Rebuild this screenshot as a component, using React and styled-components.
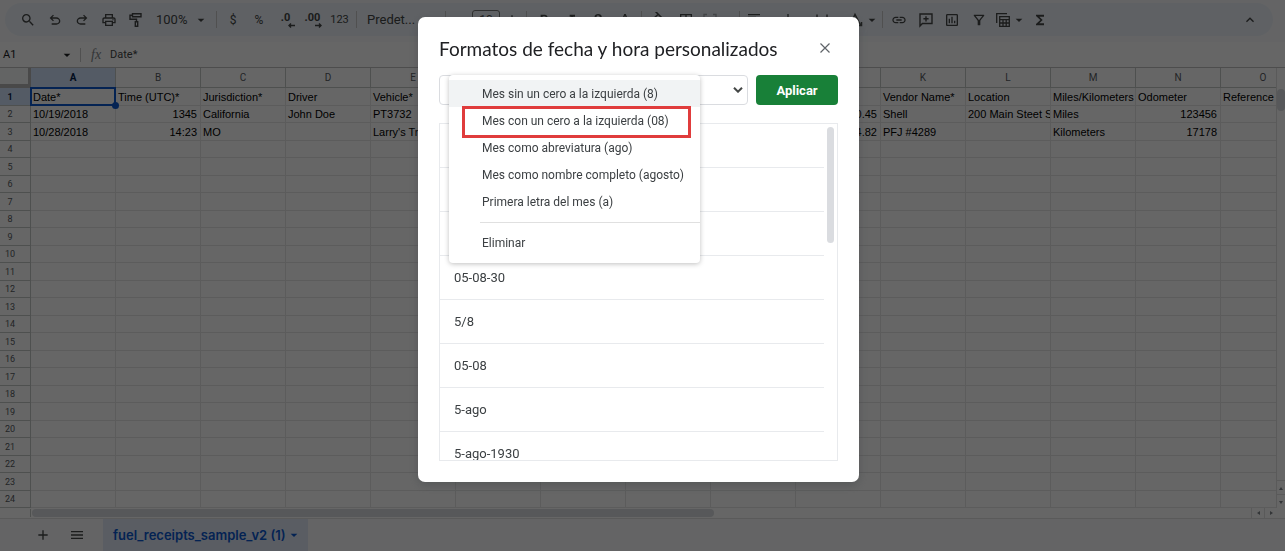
import React from "react";
import styled, { createGlobalStyle, css } from "styled-components";
import {
  MdSearch,
  MdOutlinePrint,
  MdOutlineInsertChart,
  MdOutlineFilterAlt,
  MdFunctions,
  MdArrowDropDown,
  MdKeyboardArrowUp,
  MdAdd,
  MdRemove,
  MdMenu,
  MdFormatBold,
  MdFormatItalic,
  MdStrikethroughS,
  MdFormatColorText,
  MdBorderAll,
  MdFormatAlignLeft,
  MdVerticalAlignBottom,
  MdLink,
} from "react-icons/md";

const columns = ["A", "B", "C", "D", "E", "F", "G", "H", "I", "J", "K", "L", "M", "N", "O"];

const cells = {
  A: ["Date*", "10/19/2018", "10/28/2018"],
  B: ["Time (UTC)*", "1345", "14:23"],
  C: ["Jurisdiction*", "California", "MO"],
  D: ["Driver", "John Doe"],
  E: ["Vehicle*", "PT3732", "Larry's Tr"],
  J: ["", "0.45", "4.82"],
  K: ["Vendor Name*", "Shell", "PFJ #4289"],
  L: ["Location", "200 Main Steet S"],
  M: ["Miles/Kilometers", "Miles", "Kilometers"],
  N: ["Odometer", "123456", "17178"],
  O: ["Reference"],
};

const numeric = ["B", "J", "N"];
const rows = Array.from({ length: 24 }, (_, i) => i);

const monthOptions = [
  "Mes sin un cero a la izquierda (8)",
  "Mes con un cero a la izquierda (08)",
  "Mes como abreviatura (ago)",
  "Mes como nombre completo (agosto)",
  "Primera letra del mes (a)",
];

const formats = ["", "", "", "05-08-30", "5/8", "05-08", "5-ago", "5-ago-1930"];

const UndoIcon = () => (
  <svg viewBox="0 -960 960 960" width="16" height="16" fill="currentColor">
    <path d="M280-200v-80h284q63 0 109.500-40T720-420q0-60-46.500-100T564-560H312l104 104-56 56-200-200 200-200 56 56-104 104h252q97 0 166.500 63T800-420q0 94-69.500 157T564-200H280Z" />
  </svg>
);

const RedoIcon = () => (
  <svg viewBox="0 -960 960 960" width="16" height="16" fill="currentColor">
    <path d="M396-200q-97 0-166.500-63T160-420q0-94 69.500-157T396-640h252L544-744l56-56 200 200-200 200-56-56 104-104H396q-63 0-109.500 40T240-420q0 60 46.500 100T396-280h284v80H396Z" />
  </svg>
);

const RollerIcon = () => (
  <svg viewBox="0 0 16 16" width="16" height="16" fill="none" stroke="currentColor" strokeWidth="1.4">
    <path d="M4.500 1.700h8.500v3H4.500zM4.500 3.200H2v4h6.500v2.500M7.300 9.700h2.400v4.600H7.300z" />
  </svg>
);

const CommentIcon = () => (
  <svg viewBox="0 0 16 16" width="16" height="16" fill="none" stroke="currentColor" strokeWidth="1.4">
    <path d="M2 14V2h12v9.500H4.400zM8 4.200v5.200M5.400 6.800h5.200" />
  </svg>
);

const FillIcon = () => (
  <svg viewBox="0 0 16 16" width="16" height="16" fill="none" stroke="currentColor" strokeWidth="1.5">
    <path d="M4 -1L12 7L6.500 12L1.500 7.500L7 2.500" />
  </svg>
);

const MergeIcon = () => (
  <svg viewBox="0 0 16 16" width="16" height="16" fill="none" stroke="currentColor" strokeWidth="1.4">
    <path d="M5 2.500H2v3M11 2.500h3v3M5 13.500H2v-3M11 13.500h3v-3M1.500 8h4M14.500 8h-4" />
  </svg>
);

const WrapIcon = () => (
  <svg viewBox="0 0 16 16" width="16" height="16" fill="none" stroke="currentColor" strokeWidth="1.4">
    <path d="M3 2.500v11M13 2.500v11M5 8h5M8 6l2 2l-2 2" />
  </svg>
);

const RotateIcon = () => (
  <svg viewBox="0 0 16 16" width="16" height="16" fill="none" stroke="currentColor" strokeWidth="1.5">
    <path d="M3 11L7 2.500L12.500 13M4.500 8h5M13.500 10v3.500H10" />
  </svg>
);

const TablesIcon = () => (
  <svg viewBox="0 0 16 16" width="16" height="16" fill="none" stroke="currentColor" strokeWidth="1.3">
    <path d="M1.700 11V1.700H12M4.700 4.700h9.600v9.600H4.700zM4.700 7.700h9.600M4.700 11h9.600M8 7.700v6.600M11.200 7.700v6.600" />
  </svg>
);

const ArrowLeft = () => (
  <svg viewBox="0 0 7 5" fill="none" stroke="currentColor" strokeWidth="1.4">
    <path d="M7 2.500H1M3 .500L1 2.500L3 4.500" />
  </svg>
);

const ArrowRight = () => (
  <svg viewBox="0 0 7 5" fill="none" stroke="currentColor" strokeWidth="1.4">
    <path d="M0 2.500H6M4 .500L6 2.500L4 4.500" />
  </svg>
);

const CloseIcon = () => (
  <svg viewBox="0 0 16 16" width="16" height="16" fill="none" stroke="currentColor" strokeWidth="1.2">
    <path d="M3.500 3.500L12.500 12.500M12.500 3.500L3.500 12.500" />
  </svg>
);

export default function App() {
  return (
    <>
      <GlobalStyle />
      <Sheet>
        <Toolbar>
          <ToolButton aria-label="Buscar"><MdSearch /></ToolButton>
          <ToolButton aria-label="Deshacer"><UndoIcon /></ToolButton>
          <ToolButton aria-label="Rehacer"><RedoIcon /></ToolButton>
          <ToolButton aria-label="Imprimir"><MdOutlinePrint /></ToolButton>
          <ToolButton aria-label="Copiar formato"><RollerIcon /></ToolButton>
          <TextDropdown $width="64px">
            100%
            <MdArrowDropDown />
          </TextDropdown>
          <Separator />
          <ToolButton $width="26px">$</ToolButton>
          <ToolButton $width="26px">%</ToolButton>
          <Decimal>.0<ArrowLeft /></Decimal>
          <Decimal>.00<ArrowRight /></Decimal>
          <ToolButton $small>123</ToolButton>
          <Separator />
          <TextDropdown $width="82px">Predet...</TextDropdown>
          <Separator />
          <ToolButton $width="23px" aria-label="Reducir"><MdRemove /></ToolButton>
          <SizeInput aria-label="Tamaño de fuente" defaultValue="10" />
          <ToolButton $width="23px" aria-label="Aumentar"><MdAdd /></ToolButton>
          <Separator />
          <ToolButton aria-label="Negrita"><MdFormatBold /></ToolButton>
          <ToolButton aria-label="Cursiva"><MdFormatItalic /></ToolButton>
          <ToolButton aria-label="Tachado"><MdStrikethroughS /></ToolButton>
          <ToolButton aria-label="Color del texto"><MdFormatColorText /></ToolButton>
          <Separator />
          <ToolButton aria-label="Color de relleno"><FillIcon /></ToolButton>
          <ToolButton aria-label="Bordes"><MdBorderAll /></ToolButton>
          <IconDropdown $width="37px" $faded aria-label="Combinar"><MergeIcon /><MdArrowDropDown /></IconDropdown>
          <Separator />
          <IconDropdown $width="34px" aria-label="Alinear"><MdFormatAlignLeft /><MdArrowDropDown /></IconDropdown>
          <IconDropdown $width="34px" aria-label="Alinear en vertical"><MdVerticalAlignBottom /><MdArrowDropDown /></IconDropdown>
          <IconDropdown $width="34px" aria-label="Ajuste"><WrapIcon /><MdArrowDropDown /></IconDropdown>
          <IconDropdown $width="34px" aria-label="Rotar"><RotateIcon /><MdArrowDropDown /></IconDropdown>
          <Separator />
          <ToolButton $width="26px" aria-label="Enlace"><MdLink /></ToolButton>
          <ToolButton aria-label="Comentario"><CommentIcon /></ToolButton>
          <ToolButton $width="26px" aria-label="Gráfico"><MdOutlineInsertChart /></ToolButton>
          <ToolButton aria-label="Filtro"><MdOutlineFilterAlt /></ToolButton>
          <IconDropdown $width="35px" aria-label="Tablas"><TablesIcon /><MdArrowDropDown /></IconDropdown>
          <ToolButton $width="26px" aria-label="Funciones"><MdFunctions /></ToolButton>
          <Spacer />
          <ToolButton aria-label="Ocultar menús"><MdKeyboardArrowUp /></ToolButton>
        </Toolbar>

        <FormulaBar>
          <NameBox>
            A1
            <MdArrowDropDown />
          </NameBox>
          <Separator $short />
          <Fx>fx</Fx>
          <FormulaInput aria-label="Fórmula" defaultValue="Date*" />
        </FormulaBar>

        <GridArea>
          <GridScroll>
            <Grid>
              <thead>
                <tr>
                  <Corner />
                  {columns.map((c) => (
                    <ColHead key={c} $active={c === "A"}>{c}</ColHead>
                  ))}
                </tr>
              </thead>
              <tbody>
                {rows.map((r) => (
                  <Row key={r}>
                    <RowHead $active={r === 0}>{r + 1}</RowHead>
                    {columns.map((c) => (
                      <Cell key={c} $right={r > 0 && numeric.includes(c)} $selected={r === 0 && c === "A"}>
                        <span>{cells[c]?.[r]}</span>
                      </Cell>
                    ))}
                  </Row>
                ))}
              </tbody>
            </Grid>
          </GridScroll>
          <VerticalBar>
            <VerticalThumb />
            <Spacer />
            <Arrow $dir="up" />
            <Arrow $dir="down" />
          </VerticalBar>
        </GridArea>

        <HorizontalBar>
          <HorizontalTrack><HorizontalThumb /></HorizontalTrack>
          <Arrow $dir="left" />
          <Arrow $dir="right" />
        </HorizontalBar>

        <Tabs>
          <TabTool aria-label="Añadir hoja"><MdAdd /></TabTool>
          <TabTool aria-label="Todas las hojas"><MdMenu /></TabTool>
          <Tab>
            fuel_receipts_sample_v2 (1)
            <MdArrowDropDown />
          </Tab>
        </Tabs>
      </Sheet>

      <Overlay>
        <Dialog role="dialog" aria-labelledby="title">
          <DialogHead>
            <h1 id="title">Formatos de fecha y hora personalizados</h1>
            <CloseButton aria-label="Cerrar"><CloseIcon /></CloseButton>
          </DialogHead>
          <Controls>
            <Combo>
              <input aria-label="Formato" />
              <button aria-label="Más opciones">
                <svg viewBox="0 0 10 6" width="10" height="6" fill="none" stroke="currentColor" strokeWidth="2">
                  <path d="M1 .700L5 4.700L9 .700" />
                </svg>
              </button>
              <Menu role="menu">
                {monthOptions.map((text, i) => (
                  <MenuItem key={text} role="menuitem" $hover={i === 0}>
                    {text}
                    {i === 1 && <Highlight />}
                  </MenuItem>
                ))}
                <MenuLine />
                <MenuItem role="menuitem">Eliminar</MenuItem>
              </Menu>
            </Combo>
            <ApplyButton>Aplicar</ApplyButton>
          </Controls>
          <ListBox>
            <FormatList>
              {formats.map((f, i) => (
                <li key={i}>{f}</li>
              ))}
            </FormatList>
            <ListTrack><ListThumb /></ListTrack>
          </ListBox>
        </Dialog>
      </Overlay>
    </>
  );
}

const GlobalStyle = createGlobalStyle`
  *{
    box-sizing: border-box;
  }
  body{
    margin: 0;
    overflow: hidden;
    font-family: Roboto, "Liberation Sans", sans-serif;
  }
  button, input{
    font-family: inherit;
    border: 0;
    padding: 0;
    background: none;
    outline: none;
  }
`;

const Sheet = styled.div`
  display: flex;
  flex-direction: column;
  min-height: 100vh;
  background: #f9fbfd;
  color: #444746;
`;

const Toolbar = styled.div`
  display: flex;
  align-items: center;
  height: 33px;
  margin: 3px 12px 6px 5px;
  padding: 0 10px 0 9px;
  border-radius: 17px;
  background: #edf2fa;
`;

const ToolButton = styled.button`
  flex: none;
  display: flex;
  align-items: center;
  justify-content: center;
  width: ${(p) => p.$width || "27px"};
  height: 24px;
  color: #444746;
  font-size: ${(p) => (p.$small ? "11px" : "12px")};
  svg{
    width: 16px;
    height: 16px;
  }
`;

const Decimal = styled(ToolButton)`
  flex-direction: column;
  font-size: 11px;
  font-weight: 700;
  line-height: 11px;
  svg{
    width: 7px;
    height: 5px;
    margin-left: 12px;
  }
`;

const TextDropdown = styled.button`
  flex: none;
  display: flex;
  align-items: center;
  justify-content: space-between;
  width: ${(p) => p.$width};
  padding: 0 4px 0 7px;
  color: #444746;
  font-size: 13px;
  svg{
    width: 16px;
    height: 16px;
  }
`;

const IconDropdown = styled.button`
  flex: none;
  display: flex;
  align-items: center;
  width: ${(p) => p.$width};
  padding-left: 3px;
  color: #444746;
  opacity: ${(p) => (p.$faded ? 0.4 : 1)};
  svg{
    flex: none;
    width: 16px;
    height: 16px;
  }
`;

const SizeInput = styled.input`
  width: 28px;
  height: 20px;
  border: 1px solid #747775;
  border-radius: 3px;
  color: #444746;
  font-size: 12px;
  text-align: center;
`;

const Separator = styled.div`
  flex: none;
  width: 1px;
  height: ${(p) => (p.$short ? "14px" : "17px")};
  margin: 0 3px;
  background: #c7c7c7;
`;

const Spacer = styled.div`
  flex: 1;
`;

const FormulaBar = styled.div`
  display: flex;
  align-items: center;
  height: 25px;
  background: white;
`;

const NameBox = styled.button`
  display: flex;
  align-items: center;
  justify-content: space-between;
  width: 77px;
  padding: 0 2px 0 3px;
  color: #202124;
  font-size: 11px;
  svg{
    width: 16px;
    height: 16px;
  }
`;

const Fx = styled.i`
  width: 26px;
  padding-left: 7px;
  color: #80868b;
  font: italic 14px "Liberation Serif", serif;
`;

const FormulaInput = styled.input`
  flex: 1;
  color: #444746;
  font-size: 11px;
`;

const GridArea = styled.div`
  display: flex;
  border-top: 1px solid #c0c0c0;
  background: white;
`;

const GridScroll = styled.div`
  flex: 1;
  min-width: 0;
  overflow: hidden;
`;

const Grid = styled.table`
  width: 1306px;
  table-layout: fixed;
  border-collapse: separate;
  border-spacing: 0;
  font-family: "Liberation Sans", Arial, sans-serif;
  font-size: 11px;
  th, td{
    padding: 0;
    border-right: 1px solid #e6e6e6;
    border-bottom: 1px solid #e6e6e6;
    line-height: 16px;
  }
`;

const Corner = styled.td`
  width: 31px;
  height: 20px;
  background: #f8f9fa;
  &&{
    border-right: 3px solid #b7b7b7;
    border-bottom: 4px solid #b7b7b7;
  }
`;

const ColHead = styled.th`
  width: 85px;
  height: 20px;
  background: ${(p) => (p.$active ? "#d3e3fd" : "white")};
  color: ${(p) => (p.$active ? "#041e49" : "#575b5f")};
  font-family: Roboto, sans-serif;
  font-size: 10px;
  font-weight: ${(p) => (p.$active ? 700 : 400)};
  &&{
    border-color: #c4c7c5;
  }
`;

const Row = styled.tr`
  height: 18px;
  &:nth-child(even){
    height: 17px;
  }
`;

const RowHead = styled.th`
  background: ${(p) => (p.$active ? "#d3e3fd" : "white")};
  color: ${(p) => (p.$active ? "#041e49" : "#575b5f")};
  font-family: Roboto, sans-serif;
  font-size: 9px;
  font-weight: ${(p) => (p.$active ? 700 : 400)};
  text-align: center;
  && {
    padding-right: 10px;
    border-color: #c4c7c5;
  }
`;

const Cell = styled.td`
  position: relative;
  color: black;
  text-align: ${(p) => (p.$right ? "right" : "left")};
  span{
    display: block;
    height: 16px;
    padding: 0 3px 0 2px;
    overflow: hidden;
    white-space: nowrap;
  }
  ${(p) => p.$selected && css`
    &::before{
      content: "";
      position: absolute;
      inset: -1px -1px -1px -1px;
      border: 2px solid #0b57d0;
    }
    &::after{
      content: "";
      position: absolute;
      z-index: 1;
      right: -4px;
      bottom: -4px;
      width: 7px;
      height: 7px;
      border-radius: 50%;
      background: #0b57d0;
    }
  `}
`;

const VerticalBar = styled.div`
  flex: none;
  display: flex;
  flex-direction: column;
  align-items: center;
  width: 9px;
  padding-top: 21px;
  border-left: 1px solid #e1e1e1;
`;

const VerticalThumb = styled.div`
  width: 8px;
  height: 22px;
  border-radius: 4px;
  background: #dadce0;
`;

const arrows = {
  up: "M2 6L4 3L6 6z",
  down: "M2 3L4 6L6 3z",
  left: "M6 2L3 4L6 6z",
  right: "M3 2L6 4L3 6z",
};

function Arrow({ $dir }) {
  return (
    <ArrowButton aria-label={$dir} $side={$dir === "left" || $dir === "right"}>
      <svg viewBox="0 0 8 8" width="8" height="8" fill="#80868b">
        <path d={arrows[$dir]} />
      </svg>
    </ArrowButton>
  );
}

const ArrowButton = styled.button`
  flex: none;
  display: flex;
  align-items: center;
  justify-content: center;
  width: ${(p) => (p.$side ? "13px" : "8px")};
  height: ${(p) => (p.$side ? "10px" : "14px")};
  border: 0 solid #e1e1e1;
  border-width: ${(p) => (p.$side ? "0 0 0 1px" : "1px 0 0")};
`;

const HorizontalBar = styled.div`
  display: flex;
  align-items: center;
  height: 11px;
  padding: 0 8px 0 30px;
  border-bottom: 1px solid #e1e1e1;
  background: white;
`;

const HorizontalTrack = styled.div`
  flex: 1;
  padding: 0 1px;
  border-left: 1px solid #c4c7c5;
`;

const HorizontalThumb = styled.div`
  width: 56%;
  height: 8px;
  border-radius: 4px;
  background: #dadce0;
`;

const Tabs = styled.div`
  flex: 1;
  display: flex;
  align-items: center;
  min-height: 31px;
  padding-left: 26px;
`;

const TabTool = styled.button`
  display: flex;
  align-items: center;
  justify-content: center;
  width: 34px;
  color: #444746;
  svg{
    width: 16px;
    height: 16px;
  }
`;

const Tab = styled.button`
  display: flex;
  align-items: center;
  align-self: stretch;
  margin-left: 9px;
  padding: 0 6px 0 10px;
  background: #e1e9f7;
  color: #0b57d0;
  font-family: Inter, sans-serif;
  font-size: 13px;
  font-weight: 600;
  svg{
    width: 16px;
    height: 16px;
  }
`;

const Overlay = styled.div`
  position: fixed;
  inset: 0;
  z-index: 2;
  display: flex;
  justify-content: center;
  align-items: flex-start;
  padding: 17px 8px 0 0;
  background: rgba(0, 0, 0, 0.6);
`;

const Dialog = styled.div`
  width: 441px;
  padding: 16px 21px 21px;
  border-radius: 7px;
  background: white;
  box-shadow: 0 3px 10px rgba(60, 64, 67, 0.4);
`;

const DialogHead = styled.div`
  display: flex;
  justify-content: space-between;
  align-items: center;
  height: 30px;
  margin-bottom: 12px;
  h1{
    margin: 0;
    color: #202124;
    font-family: Lato, sans-serif;
    font-size: 19px;
    font-weight: 400;
  }
`;

const CloseButton = styled.button`
  display: flex;
  padding-right: 5px;
  color: #5f6368;
`;

const Controls = styled.div`
  display: flex;
  gap: 8px;
  margin-bottom: 18px;
`;

const Combo = styled.div`
  position: relative;
  flex: 1;
  display: flex;
  height: 30px;
  border: 1px solid #dadce0;
  border-radius: 4px;
  input{
    flex: 1;
    min-width: 0;
  }
  > button{
    display: flex;
    align-items: center;
    width: 14px;
    color: #444746;
  }
`;

const Menu = styled.div`
  position: absolute;
  z-index: 1;
  top: -1px;
  left: 9px;
  width: 251px;
  padding: 5px 0 7px;
  border-radius: 4px;
  background: white;
  box-shadow: 0 1px 5px rgba(0, 0, 0, 0.25);
`;

const MenuItem = styled.button`
  position: relative;
  display: block;
  width: 100%;
  height: 27px;
  padding-left: 33px;
  background: ${(p) => (p.$hover ? "#f1f3f4" : "white")};
  color: #3c4043;
  font-size: 12px;
  text-align: left;
  white-space: nowrap;
`;

const Highlight = styled.span`
  position: absolute;
  inset: -1px 9px -4px 13px;
  z-index: 1;
  border: 3px solid #e03c3c;
`;

const MenuLine = styled.div`
  height: 1px;
  margin: 7px 0 6px 31px;
  background: #e0e0e0;
`;

const ApplyButton = styled.button`
  width: 82px;
  height: 30px;
  border-radius: 4px;
  background: #188038;
  color: white;
  font-size: 13px;
  font-weight: 700;
`;

const ListBox = styled.div`
  display: flex;
  height: 338px;
  overflow: hidden;
  border: 1px solid #e8eaed;
`;

const FormatList = styled.ul`
  flex: 1;
  margin: 0;
  padding: 0;
  list-style: none;
  color: #3c4043;
  font-size: 13px;
  li{
    height: 44px;
    padding-left: 14px;
    border-bottom: 1px solid #e8eaed;
    line-height: 43px;
  }
`;

const ListTrack = styled.div`
  width: 13px;
  padding: 3px;
`;

const ListThumb = styled.div`
  width: 7px;
  height: 116px;
  border-radius: 4px;
  background: #dadce0;
`;
